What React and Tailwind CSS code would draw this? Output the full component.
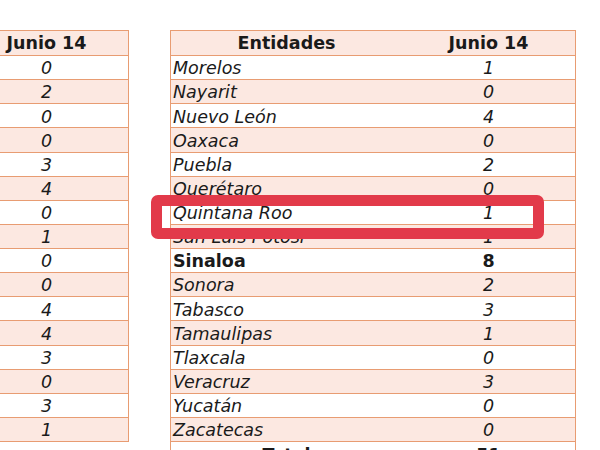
const leftValues = ['0', '2', '0', '0', '3', '4', '0', '1', '0', '0', '4', '4', '3', '0', '3', '1'];

const rows = [
    { name: 'Morelos', value: '1' },
    { name: 'Nayarit', value: '0' },
    { name: 'Nuevo León', value: '4' },
    { name: 'Oaxaca', value: '0' },
    { name: 'Puebla', value: '2' },
    { name: 'Querétaro', value: '0' },
    { name: 'Quintana Roo', value: '1' },
    { name: 'San Luis Potosí', value: '1' },
    { name: 'Sinaloa', value: '8', bold: true },
    { name: 'Sonora', value: '2' },
    { name: 'Tabasco', value: '3' },
    { name: 'Tamaulipas', value: '1' },
    { name: 'Tlaxcala', value: '0' },
    { name: 'Veracruz', value: '3' },
    { name: 'Yucatán', value: '0' },
    { name: 'Zacatecas', value: '0' },
];

const rowBg = (i) => (i % 2 === 0 ? 'bg-white' : 'bg-[#fce8e1]');

const App = () => {
    return (
        <div className="relative w-[600px] h-[450px] overflow-hidden bg-white text-[#1a1a1a] font-['DejaVu_Sans',sans-serif] text-[17.5px]">
            <div className="flex items-start gap-[41px] pt-[30px]">
                {/* Left table (cut off) */}
                <div className="-ml-[36px] w-[165px] border-t border-r border-l border-[#e89c72]">
                    <div className="h-[25px] flex items-center justify-center pt-[2px] bg-[#fce8e1] border-b border-[#e89c72] font-bold leading-none">
                        Junio 14
                    </div>
                    {leftValues.map((v, i) => (
                        <div
                            key={i}
                            className={`h-[24.125px] flex items-center justify-center pt-[3px] italic leading-none border-b border-[#e89c72] ${rowBg(i)}`}
                        >
                            {v}
                        </div>
                    ))}
                </div>

                {/* Right table */}
                <div className="w-[406px] border-t border-r border-l border-[#e89c72]">
                    <div className="h-[25px] grid grid-cols-[231px_1fr] items-center pt-[2px] bg-[#fce8e1] border-b border-[#e89c72] font-bold leading-none">
                        <span className="text-center">Entidades</span>
                        <span className="text-center">Junio 14</span>
                    </div>
                    {rows.map((r, i) => (
                        <div
                            key={r.name}
                            className={`h-[24.125px] grid grid-cols-[231px_1fr] items-center pt-[3px] leading-none border-b border-[#e89c72] ${rowBg(i)} ${r.bold ? 'font-bold' : 'italic'}`}
                        >
                            <span className="pl-[2px] whitespace-nowrap">{r.name}</span>
                            <span className="text-center">{r.value}</span>
                        </div>
                    ))}
                    <div className="h-[24px] grid grid-cols-[231px_1fr] items-start pt-[5px] bg-white font-bold leading-none">
                        <span className="text-center">Total</span>
                        <span className="text-center">51</span>
                    </div>
                </div>
            </div>

            {/* Highlight */}
            <div className="absolute left-[151px] top-[195px] w-[393px] h-[44px] border-[11px] border-[#e23a4a] rounded-[7px]" />
        </div>
    );
};

export default App;
